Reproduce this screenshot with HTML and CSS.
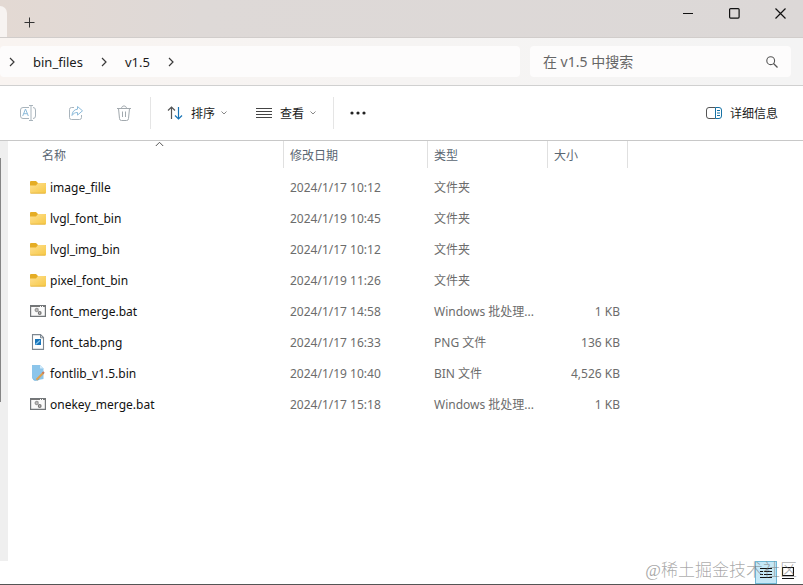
FILE: index.html
```html
<!DOCTYPE html>
<html lang="zh-CN">
<head>
<meta charset="utf-8">
<title>v1.5</title>
<link rel="stylesheet" href="styles.css">
</head>
<body>
<svg class="sprite" aria-hidden="true">
  <defs>
    <linearGradient id="gold" x1="0" y1="0" x2="1" y2="1"><stop offset="0" stop-color="#ffe092"/><stop offset="1" stop-color="#f6c844"/></linearGradient>
  </defs>
  <symbol id="folder" viewBox="0 0 16 16"><path d="M0 3a1 1 0 0 1 1-1h5l2 2h7a1 1 0 0 1 1 1v5H0z" fill="#e5ad25"/><path d="M0 6.500h6L8 4h7a1 1 0 0 1 1 1v8.500a1 1 0 0 1-1 1H1a1 1 0 0 1-1-1z" fill="url(#gold)"/><path d="M.5 14.200h15" stroke="#dfaa35" stroke-width=".7"/></symbol>
  <symbol id="bat" viewBox="0 0 16 16"><path d="M.6 2.600h14.800v10.800H.6z" fill="#fafafa" stroke="#727679" stroke-width="1.200"/><path d="M1 3.500h14" stroke="#777" stroke-width="1"/><path d="M10 3.500h1m1 0h1" stroke="#fff"/><circle cx="6.700" cy="7" r="1.500" fill="#ccc" stroke="#999" stroke-width="1.300"/><circle cx="9.700" cy="10" r="1.300" fill="#ddd" stroke="#777" stroke-width="1.300"/></symbol>
  <symbol id="png" viewBox="0 0 16 16"><path d="M2.500.6h8l3 3v11.800h-11z" fill="#fff" stroke="#7d8790" stroke-width="1.100"/><path d="M10.500.8v3h3" fill="none" stroke="#7d8790"/><path d="M5 5h6v6H5z" fill="#1975ba"/><path d="M5.500 10.500L10 6.500" fill="none" stroke="#8ac7ed" stroke-width="1.200"/></symbol>
  <symbol id="bin" viewBox="0 0 16 16"><path d="M2 0h8l3.500 3.500V14L5 15.500 2 13z" fill="#8cc5ea"/><path d="M10 0v3.500h3.500z" fill="#d1eafa"/><path d="M2 13l3 2 5-1.500-2 2H4z" fill="#65a9d6"/><path d="M6.500 14.800l7-7" stroke="#e0a04d" stroke-width="2"/><path d="M12.500 8.500l1.500-1.500" stroke="#c77a5c" stroke-width="2"/></symbol>
  <symbol id="right" viewBox="0 0 8 10"><path d="M2 1l4 4-4 4" fill="none" stroke="#3a3a3a" stroke-width="1.200"/></symbol>
  <symbol id="down" viewBox="0 0 8 8"><path d="M1.500 2.500L4 5l2.500-2.500" fill="none" stroke="#888"/></symbol>
</svg>

<header class="titlebar">
  <span class="active-tab"></span>
  <button class="new-tab" aria-label="新建标签页"><svg width="11" height="11"><path d="M5.500.5v10M.5 5.500h10" stroke="#333"/></svg></button>
  <div class="window-controls">
    <button aria-label="最小化"><svg width="11" height="11"><path d="M0 5.500h10" stroke="#111"/></svg></button>
    <button aria-label="最大化"><svg width="11" height="11"><rect x=".6" y=".6" width="9.500" height="9.500" rx="1" fill="none" stroke="#111" stroke-width="1.200"/></svg></button>
    <button aria-label="关闭"><svg width="11" height="11"><path d="M.5.5l10 10m0-10l-10 10" stroke="#111" stroke-width="1.200"/></svg></button>
  </div>
</header>

<div class="address-row">
  <nav class="breadcrumb" aria-label="路径">
    <svg class="chevron"><use href="#right"/></svg>
    <a href="#">bin_files</a>
    <svg class="chevron"><use href="#right"/></svg>
    <a href="#">v1.5</a>
    <svg class="chevron"><use href="#right"/></svg>
  </nav>
  <div class="search">
    <input type="text" aria-label="搜索" placeholder="在 v1.5 中搜索">
    <svg width="12" height="12"><circle cx="4.700" cy="4.700" r="3.900" fill="none" stroke="#555" stroke-width="1.100"/><path d="M7.500 7.500l4 4" stroke="#555" stroke-width="1.200"/></svg>
  </div>
</div>

<div class="toolbar">
  <div class="file-actions">
    <button aria-label="重命名"><svg width="16" height="16" fill="none" stroke="#a9b4bc"><path d="M9 2.500H3A2.500 2.500 0 0 0 .5 5v6A2.500 2.500 0 0 0 3 13.500h6M13 2.500a2.500 2.500 0 0 1 2.500 2.500v6a2.500 2.500 0 0 1-2.500 2.500M9 .5h4M9 15.500h4M11 .5v15"/><path d="M2.700 11l2.800-7 2.800 7M3.700 8.700h3.600" stroke="#8dbbda"/></svg></button>
    <button aria-label="共享"><svg width="16" height="16" fill="none" stroke="#a9b4bc"><path d="M6 2.500H3.500a2 2 0 0 0-2 2v8a2 2 0 0 0 2 2h8a2 2 0 0 0 2-2V10"/><path d="M9.500 1.500l5 4.300-5 4.300V7.500C7 7.400 5.300 8.500 4 10.500c.2-3.500 2-6 5.500-6.300z" stroke="#8dbbda"/></svg></button>
    <button aria-label="删除"><svg width="16" height="16" fill="none" stroke="#a2a9ae"><path d="M1 3.500h14M5.500 3.500C5.500.1 10.500.1 10.500 3.500M2.500 3.500l1 10a2 2 0 0 0 2 2h5a2 2 0 0 0 2-2l1-10M6.500 6.500v5.500M9.500 6.500v5.500"/></svg></button>
  </div>
  <div class="view-actions">
    <button><svg width="16" height="14" fill="none" stroke="#555" stroke-width="1.200"><path d="M4.500 13V1M1 4.500L4.500 1 8 4.500"/><path d="M11.500 1v12M8 9.500l3.500 3.500L15 9.500" stroke="#1672b5"/></svg><span>排序</span><svg class="down"><use href="#down"/></svg></button>
    <button><svg width="16" height="12" stroke="#444"><path d="M0 1.500h16M0 4.500h16M0 7.500h16M0 10.500h16"/></svg><span>查看</span><svg class="down"><use href="#down"/></svg></button>
  </div>
  <button class="more" aria-label="更多"><svg width="16" height="4" fill="#222"><circle cx="2" cy="2" r="1.600"/><circle cx="8" cy="2" r="1.600"/><circle cx="14" cy="2" r="1.600"/></svg></button>
  <button class="details"><svg width="16" height="12" fill="none" stroke="#555"><path d="M9.500.5H3A2.500 2.500 0 0 0 .5 3v6A2.500 2.500 0 0 0 3 11.500h6.500"/><path d="M9.500.5H13A2.500 2.500 0 0 1 15.500 3v6a2.500 2.500 0 0 1-2.500 2.500H9.500zM11 3.500h3M11 6h3M11 8.500h3" stroke="#1672a5"/></svg><span>详细信息</span></button>
</div>

<main class="content">
  <div class="side"><span class="thumb"></span></div>
  <div class="list">
    <table>
      <colgroup><col class="c-name"><col class="c-date"><col class="c-type"><col class="c-size"></colgroup>
      <thead>
        <tr><th>名称<svg class="sort" width="9" height="6"><path d="M.8 5l3.700-3.700L8.200 5" fill="none" stroke="#555"/></svg></th><th>修改日期</th><th>类型</th><th>大小</th></tr>
      </thead>
      <tbody>
        <tr><td><svg class="icon"><use href="#folder"/></svg>image_fille</td><td>2024/1/17 10:12</td><td>文件夹</td><td></td></tr>
        <tr><td><svg class="icon"><use href="#folder"/></svg>lvgl_font_bin</td><td>2024/1/19 10:45</td><td>文件夹</td><td></td></tr>
        <tr><td><svg class="icon"><use href="#folder"/></svg>lvgl_img_bin</td><td>2024/1/17 10:12</td><td>文件夹</td><td></td></tr>
        <tr><td><svg class="icon"><use href="#folder"/></svg>pixel_font_bin</td><td>2024/1/19 11:26</td><td>文件夹</td><td></td></tr>
        <tr><td><svg class="icon"><use href="#bat"/></svg>font_merge.bat</td><td>2024/1/17 14:58</td><td>Windows 批处理...</td><td>1 KB</td></tr>
        <tr><td><svg class="icon"><use href="#png"/></svg>font_tab.png</td><td>2024/1/17 16:33</td><td>PNG 文件</td><td>136 KB</td></tr>
        <tr><td><svg class="icon"><use href="#bin"/></svg>fontlib_v1.5.bin</td><td>2024/1/19 10:40</td><td>BIN 文件</td><td>4,526 KB</td></tr>
        <tr><td><svg class="icon"><use href="#bat"/></svg>onekey_merge.bat</td><td>2024/1/17 15:18</td><td>Windows 批处理...</td><td>1 KB</td></tr>
      </tbody>
    </table>
  </div>
</main>

<footer class="statusbar">
  <button class="selected" aria-label="详细信息视图"><svg width="12" height="12" stroke="#111"><path d="M0 1.500h12M0 4.500h3M4 4.500h8M0 7.500h3M4 7.500h8M0 10.500h12"/></svg></button>
  <button aria-label="大图标视图"><svg width="12" height="12" fill="none" stroke="#111"><path d="M.5.5h11v8H.5zM0 11.500h12" stroke-width="1.200"/></svg></button>
  <span class="watermark">@稀土掘金技术社区</span>
</footer>
</body>
</html>
```
FILE: styles.css
```css
* { box-sizing: border-box; }
body {
  margin: 0;
  min-height: 100vh;
  display: flex;
  flex-direction: column;
  background: #fff;
  color: #1b1b1b;
  font: 12px/18px "Noto Sans", "Noto Sans CJK SC", sans-serif;
}
button {
  display: flex;
  align-items: center;
  justify-content: center;
  padding: 0;
  border: 0;
  background: none;
  color: inherit;
  font: inherit;
}
a { color: inherit; text-decoration: none; }
svg { display: block; flex: none; }
.sprite { position: absolute; width: 0; height: 0; }

.titlebar {
  display: flex;
  height: 38px;
  background: linear-gradient(90deg, #e3d9d3, #ded9d7 25%, #dcd8d7);
  border-bottom: 1px solid #d1cdcb;
}
.active-tab {
  width: 7px;
  margin-top: 6px;
  border-top-right-radius: 7px;
  background: #f7f3f1;
}
.new-tab { width: 45px; padding-top: 8px; }
.window-controls { display: flex; height: 27px; margin-left: auto; }
.window-controls button { width: 46px; }

.address-row {
  display: flex;
  gap: 10px;
  height: 48px;
  padding: 8px 12px 8px 0;
  background: linear-gradient(90deg, #f9f4f1, #f6f4f3 50%, #f4f4f4);
  border-bottom: 1px solid #d0d0d0;
}
.breadcrumb, .search {
  display: flex;
  align-items: center;
  border-radius: 4px;
  background: #fdfcfc;
}
.breadcrumb { flex: 1; gap: 17px; padding-left: 8px; font-size: 13px; }
.chevron { width: 8px; height: 10px; }
.search { flex: 0 0 33%; padding: 0 13px; }
.search input {
  flex: 1;
  min-width: 0;
  padding: 0;
  border: 0;
  outline: 0;
  background: none;
  font: inherit;
  font-size: 14px;
}
.search input::placeholder { color: #666; opacity: 1; }

.toolbar {
  display: flex;
  align-items: center;
  height: 55px;
  padding-right: 25px;
  border-bottom: 1px solid #c8c8c8;
}
.toolbar span { padding-top: 2px; }
.file-actions { display: flex; height: 32px; padding: 0 18px 0 20px; gap: 32px; border-right: 1px solid #e5e5e5; }
.view-actions { display: flex; height: 32px; padding: 0 16px; gap: 28px; border-right: 1px solid #e5e5e5; }
.view-actions button, .details { gap: 8px; }
.down { width: 8px; height: 8px; margin-left: -3px; }
.more { width: 48px; height: 32px; }
.details { margin-left: auto; }

.content { display: flex; flex: 1; }
.side { width: 8px; padding-top: 17px; background: #efefef; }
.thumb { display: block; width: 1px; height: 244px; background: #858585; }
.list { flex: 1; min-width: 0; }
table { width: 620px; table-layout: fixed; border-collapse: separate; border-spacing: 0; color: #6c6c6c; }
.c-name { width: 276px; }
.c-date { width: 144px; }
.c-type { width: 120px; }
.c-size { width: 80px; }
th {
  position: relative;
  height: 27px;
  padding: 2px 6px 0;
  border-right: 1px solid #e0e0e0;
  color: #5a6672;
  font-weight: 400;
  text-align: left;
}
th:first-child { padding-left: 34px; }
.sort { position: absolute; top: 0; left: 50%; margin-left: 9px; }
tbody::before { content: ""; display: block; height: 4px; }
td { height: 31px; padding: 0 6px; white-space: nowrap; }
td:first-child { padding-left: 22px; color: #111; }
td:last-child { padding-right: 8px; text-align: right; }
.icon { display: inline-block; width: 16px; height: 16px; margin-right: 4px; vertical-align: -3px; }

.statusbar {
  position: relative;
  display: flex;
  justify-content: flex-end;
  height: 24px;
  padding-right: 4px;
  border-bottom: 1px solid #555;
}
.statusbar button { width: 22px; height: 23px; }
.statusbar .selected { border: 1px solid #70b8d5; background: #c5e8f7; }
.watermark {
  position: absolute;
  right: 6px;
  bottom: 2px;
  color: rgba(110, 110, 110, 0.6);
  font-family: "Liberation Serif", "Noto Sans CJK SC", serif;
  font-size: 17px;
  font-weight: 300;
  line-height: 22px;
}
```
